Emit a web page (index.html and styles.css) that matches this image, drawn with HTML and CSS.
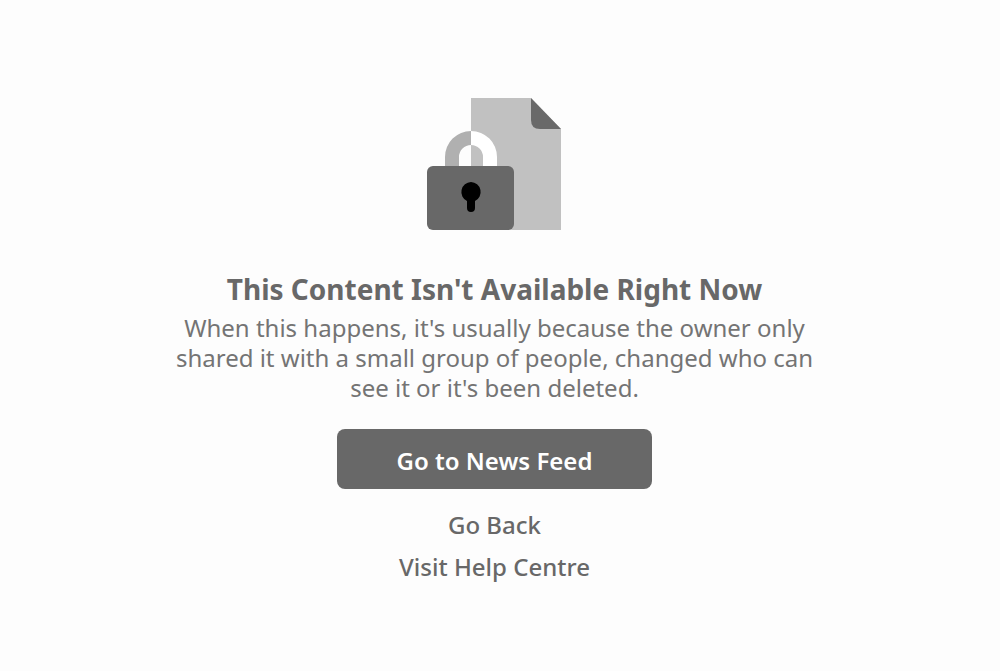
FILE: index.html
```html
<!DOCTYPE html>
<html lang="en">
<head>
<meta charset="utf-8">
<meta name="viewport" content="width=device-width, initial-scale=1">
<title>Content Unavailable</title>
<link rel="stylesheet" href="styles.css">
</head>
<body>
<main class="notice">
  <svg class="notice-art" viewBox="0 0 135 132" width="135" height="132" aria-hidden="true">
    <path d="M44 0H104L134 31V132H44Z" fill="#c1c1c1"/>
    <path d="M104 0L134 31H113Q104 31 104 22Z" fill="#696969"/>
    <path d="M18 68V59A26 26 0 0 1 44 33V47A12 12 0 0 0 32 59V68Z" fill="#b0b0b0"/>
    <path d="M44 33A26 26 0 0 1 70 59V68H56V59A12 12 0 0 0 44 47Z" fill="#fff"/>
    <rect x="0" y="68" width="87" height="64" rx="6" fill="#686868"/>
    <path d="M44 84A10 10 0 0 1 48 103V110Q48 114 44 114Q40 114 40 110V103A10 10 0 0 1 44 84Z" fill="#000"/>
  </svg>
  <h1 class="notice-title">This Content Isn't Available Right Now</h1>
  <p class="notice-text">When this happens, it's usually because the owner only shared it with a small group of people, changed who can see it or it's been deleted.</p>
  <button class="primary" type="button">Go to News Feed</button>
  <nav class="links">
    <a class="link" href="#back">Go Back</a>
    <a class="link" href="#help">Visit Help Centre</a>
  </nav>
</main>
</body>
</html>
```
FILE: styles.css
```css
body {
  margin: 0;
  background: #fdfdfd;
  color: #686868;
  font-family: "Noto Sans", "Open Sans", sans-serif;
}

.notice {
  box-sizing: border-box;
  max-width: 650px;
  margin: 0 auto;
  padding: 98px 11px 40px 0;
  display: flex;
  flex-direction: column;
  align-items: center;
  text-align: center;
}

.notice-title {
  margin: 39px 0 0;
  font-size: 28px;
  line-height: 40px;
  font-weight: 700;
}

.notice-text {
  margin: 4px 0 0;
  color: #747474;
  font-size: 24px;
  line-height: 30px;
}

.primary {
  box-sizing: border-box;
  width: 315px;
  max-width: 100%;
  height: 60px;
  margin: 26px 0 0;
  padding: 4px 0 0;
  border: 0;
  border-radius: 8px;
  background: #686868;
  color: #fff;
  font: 600 24px/30px "Noto Sans", "Open Sans", sans-serif;
}

.links {
  margin-top: 15px;
  display: flex;
  flex-direction: column;
  align-items: center;
}

.link {
  color: #686868;
  font-size: 24px;
  line-height: 42px;
  font-weight: 500;
  text-decoration: none;
}
```
